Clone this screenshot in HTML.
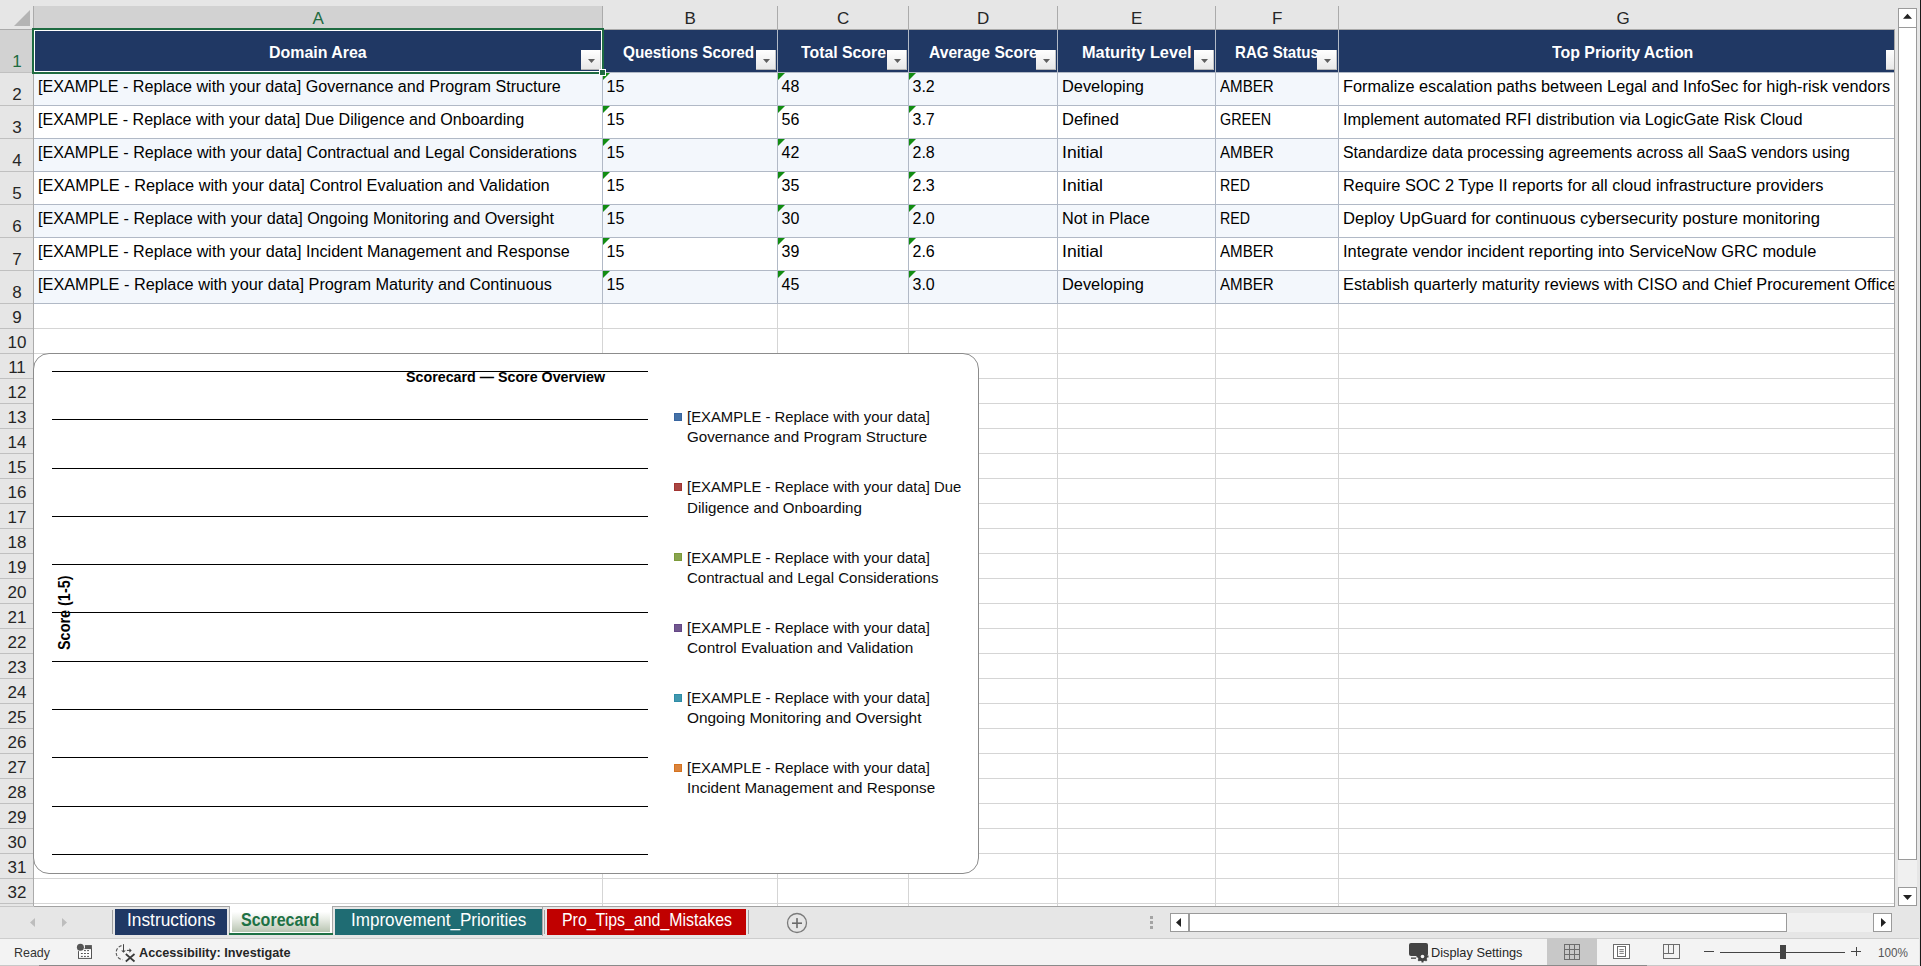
<!DOCTYPE html>
<html><head><meta charset="utf-8"><style>
html,body{margin:0;padding:0;}
body{width:1921px;height:966px;position:relative;overflow:hidden;font-family:"Liberation Sans", sans-serif;background:#e6e6e6;}
</style></head><body>
<div style="position:absolute;left:0px;top:0px;width:1921px;height:966px;background:#e6e6e6;"></div><div style="position:absolute;left:33px;top:29px;width:1861px;height:877px;background:#ffffff;"></div><div style="position:absolute;left:33px;top:328px;width:1861px;height:1px;background:#d5d5d5;"></div><div style="position:absolute;left:33px;top:353px;width:1861px;height:1px;background:#d5d5d5;"></div><div style="position:absolute;left:33px;top:378px;width:1861px;height:1px;background:#d5d5d5;"></div><div style="position:absolute;left:33px;top:403px;width:1861px;height:1px;background:#d5d5d5;"></div><div style="position:absolute;left:33px;top:428px;width:1861px;height:1px;background:#d5d5d5;"></div><div style="position:absolute;left:33px;top:453px;width:1861px;height:1px;background:#d5d5d5;"></div><div style="position:absolute;left:33px;top:478px;width:1861px;height:1px;background:#d5d5d5;"></div><div style="position:absolute;left:33px;top:503px;width:1861px;height:1px;background:#d5d5d5;"></div><div style="position:absolute;left:33px;top:528px;width:1861px;height:1px;background:#d5d5d5;"></div><div style="position:absolute;left:33px;top:553px;width:1861px;height:1px;background:#d5d5d5;"></div><div style="position:absolute;left:33px;top:578px;width:1861px;height:1px;background:#d5d5d5;"></div><div style="position:absolute;left:33px;top:603px;width:1861px;height:1px;background:#d5d5d5;"></div><div style="position:absolute;left:33px;top:628px;width:1861px;height:1px;background:#d5d5d5;"></div><div style="position:absolute;left:33px;top:653px;width:1861px;height:1px;background:#d5d5d5;"></div><div style="position:absolute;left:33px;top:678px;width:1861px;height:1px;background:#d5d5d5;"></div><div style="position:absolute;left:33px;top:703px;width:1861px;height:1px;background:#d5d5d5;"></div><div style="position:absolute;left:33px;top:728px;width:1861px;height:1px;background:#d5d5d5;"></div><div style="position:absolute;left:33px;top:753px;width:1861px;height:1px;background:#d5d5d5;"></div><div style="position:absolute;left:33px;top:778px;width:1861px;height:1px;background:#d5d5d5;"></div><div style="position:absolute;left:33px;top:803px;width:1861px;height:1px;background:#d5d5d5;"></div><div style="position:absolute;left:33px;top:828px;width:1861px;height:1px;background:#d5d5d5;"></div><div style="position:absolute;left:33px;top:853px;width:1861px;height:1px;background:#d5d5d5;"></div><div style="position:absolute;left:33px;top:878px;width:1861px;height:1px;background:#d5d5d5;"></div><div style="position:absolute;left:33px;top:903px;width:1861px;height:1px;background:#d5d5d5;"></div><div style="position:absolute;left:602px;top:303px;width:1px;height:603px;background:#d5d5d5;"></div><div style="position:absolute;left:777px;top:303px;width:1px;height:603px;background:#d5d5d5;"></div><div style="position:absolute;left:908px;top:303px;width:1px;height:603px;background:#d5d5d5;"></div><div style="position:absolute;left:1057px;top:303px;width:1px;height:603px;background:#d5d5d5;"></div><div style="position:absolute;left:1215px;top:303px;width:1px;height:603px;background:#d5d5d5;"></div><div style="position:absolute;left:1338px;top:303px;width:1px;height:603px;background:#d5d5d5;"></div><div style="position:absolute;left:33px;top:72px;width:1305px;height:33px;background:#f3f7fc;"></div><div style="position:absolute;left:33px;top:105px;width:1305px;height:33px;background:#ffffff;"></div><div style="position:absolute;left:33px;top:138px;width:1305px;height:33px;background:#f3f7fc;"></div><div style="position:absolute;left:33px;top:171px;width:1305px;height:33px;background:#ffffff;"></div><div style="position:absolute;left:33px;top:204px;width:1305px;height:33px;background:#f3f7fc;"></div><div style="position:absolute;left:33px;top:237px;width:1305px;height:33px;background:#ffffff;"></div><div style="position:absolute;left:33px;top:270px;width:1305px;height:33px;background:#f3f7fc;"></div><div style="position:absolute;left:33px;top:30px;width:1861px;height:42px;background:#203864;"></div><div style="position:absolute;left:33px;top:72px;width:1861px;height:1px;background:#b1b9c6;"></div><div style="position:absolute;left:33px;top:105px;width:1861px;height:1px;background:#b1b9c6;"></div><div style="position:absolute;left:33px;top:138px;width:1861px;height:1px;background:#b1b9c6;"></div><div style="position:absolute;left:33px;top:171px;width:1861px;height:1px;background:#b1b9c6;"></div><div style="position:absolute;left:33px;top:204px;width:1861px;height:1px;background:#b1b9c6;"></div><div style="position:absolute;left:33px;top:237px;width:1861px;height:1px;background:#b1b9c6;"></div><div style="position:absolute;left:33px;top:270px;width:1861px;height:1px;background:#b1b9c6;"></div><div style="position:absolute;left:33px;top:303px;width:1861px;height:1px;background:#b1b9c6;"></div><div style="position:absolute;left:602px;top:30px;width:1px;height:273px;background:#b1b9c6;"></div><div style="position:absolute;left:777px;top:30px;width:1px;height:273px;background:#b1b9c6;"></div><div style="position:absolute;left:908px;top:30px;width:1px;height:273px;background:#b1b9c6;"></div><div style="position:absolute;left:1057px;top:30px;width:1px;height:273px;background:#b1b9c6;"></div><div style="position:absolute;left:1215px;top:30px;width:1px;height:273px;background:#b1b9c6;"></div><div style="position:absolute;left:1338px;top:30px;width:1px;height:273px;background:#b1b9c6;"></div><div style="position:absolute;left:1894px;top:29px;width:1px;height:878px;background:#a6a6a6;"></div><div style="position:absolute;left:0px;top:906px;width:34px;height:1px;background:#c6c6c6;"></div><div style="position:absolute;left:34px;top:906px;width:1861px;height:1px;background:#a2a2a2;"></div><div style="position:absolute;left:34px;top:6px;width:568px;height:23px;background:#d2d2d2;"></div><div style="position:absolute;left:602px;top:6px;width:1px;height:23px;background:#ababab;"></div><div style="position:absolute;left:777px;top:6px;width:1px;height:23px;background:#ababab;"></div><div style="position:absolute;left:908px;top:6px;width:1px;height:23px;background:#ababab;"></div><div style="position:absolute;left:1057px;top:6px;width:1px;height:23px;background:#ababab;"></div><div style="position:absolute;left:1215px;top:6px;width:1px;height:23px;background:#ababab;"></div><div style="position:absolute;left:1338px;top:6px;width:1px;height:23px;background:#ababab;"></div><div style="position:absolute;left:0px;top:29px;width:1894px;height:1px;background:#aaaaaa;"></div><div style="position:absolute;left:0px;top:30px;width:33px;height:42px;background:#d2d2d2;"></div><div style="position:absolute;left:33px;top:6px;width:1px;height:900px;background:#ababab;"></div><div style="position:absolute;left:0px;top:72px;width:33px;height:1px;background:#c0c0c0;"></div><div style="position:absolute;left:0px;top:105px;width:33px;height:1px;background:#c0c0c0;"></div><div style="position:absolute;left:0px;top:138px;width:33px;height:1px;background:#c0c0c0;"></div><div style="position:absolute;left:0px;top:171px;width:33px;height:1px;background:#c0c0c0;"></div><div style="position:absolute;left:0px;top:204px;width:33px;height:1px;background:#c0c0c0;"></div><div style="position:absolute;left:0px;top:237px;width:33px;height:1px;background:#c0c0c0;"></div><div style="position:absolute;left:0px;top:270px;width:33px;height:1px;background:#c0c0c0;"></div><div style="position:absolute;left:0px;top:303px;width:33px;height:1px;background:#c0c0c0;"></div><div style="position:absolute;left:0px;top:328px;width:33px;height:1px;background:#c0c0c0;"></div><div style="position:absolute;left:0px;top:353px;width:33px;height:1px;background:#c0c0c0;"></div><div style="position:absolute;left:0px;top:378px;width:33px;height:1px;background:#c0c0c0;"></div><div style="position:absolute;left:0px;top:403px;width:33px;height:1px;background:#c0c0c0;"></div><div style="position:absolute;left:0px;top:428px;width:33px;height:1px;background:#c0c0c0;"></div><div style="position:absolute;left:0px;top:453px;width:33px;height:1px;background:#c0c0c0;"></div><div style="position:absolute;left:0px;top:478px;width:33px;height:1px;background:#c0c0c0;"></div><div style="position:absolute;left:0px;top:503px;width:33px;height:1px;background:#c0c0c0;"></div><div style="position:absolute;left:0px;top:528px;width:33px;height:1px;background:#c0c0c0;"></div><div style="position:absolute;left:0px;top:553px;width:33px;height:1px;background:#c0c0c0;"></div><div style="position:absolute;left:0px;top:578px;width:33px;height:1px;background:#c0c0c0;"></div><div style="position:absolute;left:0px;top:603px;width:33px;height:1px;background:#c0c0c0;"></div><div style="position:absolute;left:0px;top:628px;width:33px;height:1px;background:#c0c0c0;"></div><div style="position:absolute;left:0px;top:653px;width:33px;height:1px;background:#c0c0c0;"></div><div style="position:absolute;left:0px;top:678px;width:33px;height:1px;background:#c0c0c0;"></div><div style="position:absolute;left:0px;top:703px;width:33px;height:1px;background:#c0c0c0;"></div><div style="position:absolute;left:0px;top:728px;width:33px;height:1px;background:#c0c0c0;"></div><div style="position:absolute;left:0px;top:753px;width:33px;height:1px;background:#c0c0c0;"></div><div style="position:absolute;left:0px;top:778px;width:33px;height:1px;background:#c0c0c0;"></div><div style="position:absolute;left:0px;top:803px;width:33px;height:1px;background:#c0c0c0;"></div><div style="position:absolute;left:0px;top:828px;width:33px;height:1px;background:#c0c0c0;"></div><div style="position:absolute;left:0px;top:853px;width:33px;height:1px;background:#c0c0c0;"></div><div style="position:absolute;left:0px;top:878px;width:33px;height:1px;background:#c0c0c0;"></div><div style="position:absolute;left:0px;top:903px;width:33px;height:1px;background:#c0c0c0;"></div><svg style="position:absolute;left:0;top:0" width="33" height="29"><polygon points="30,10 30,26 14,26" fill="#b4b4b4"/></svg><div style="position:absolute;top:7.88px;line-height:21px;font-size:17px;font-weight:normal;color:#1e6b41;white-space:nowrap;left:312.53px;">A</div><div style="position:absolute;top:7.88px;line-height:21px;font-size:17px;font-weight:normal;color:#262626;white-space:nowrap;left:684.53px;">B</div><div style="position:absolute;top:7.88px;line-height:21px;font-size:17px;font-weight:normal;color:#262626;white-space:nowrap;left:837.06px;">C</div><div style="position:absolute;top:7.88px;line-height:21px;font-size:17px;font-weight:normal;color:#262626;white-space:nowrap;left:977.06px;">D</div><div style="position:absolute;top:7.88px;line-height:21px;font-size:17px;font-weight:normal;color:#262626;white-space:nowrap;left:1131.03px;">E</div><div style="position:absolute;top:7.88px;line-height:21px;font-size:17px;font-weight:normal;color:#262626;white-space:nowrap;left:1272.00px;">F</div><div style="position:absolute;top:7.88px;line-height:21px;font-size:17px;font-weight:normal;color:#262626;white-space:nowrap;left:1616.38px;">G</div><div style="position:absolute;top:50.88px;line-height:21px;font-size:17px;font-weight:normal;color:#1e6b41;white-space:nowrap;left:12.27px;">1</div><div style="position:absolute;top:83.88px;line-height:21px;font-size:17px;font-weight:normal;color:#262626;white-space:nowrap;left:12.27px;">2</div><div style="position:absolute;top:116.88px;line-height:21px;font-size:17px;font-weight:normal;color:#262626;white-space:nowrap;left:12.27px;">3</div><div style="position:absolute;top:149.88px;line-height:21px;font-size:17px;font-weight:normal;color:#262626;white-space:nowrap;left:12.27px;">4</div><div style="position:absolute;top:182.88px;line-height:21px;font-size:17px;font-weight:normal;color:#262626;white-space:nowrap;left:12.27px;">5</div><div style="position:absolute;top:215.88px;line-height:21px;font-size:17px;font-weight:normal;color:#262626;white-space:nowrap;left:12.27px;">6</div><div style="position:absolute;top:248.88px;line-height:21px;font-size:17px;font-weight:normal;color:#262626;white-space:nowrap;left:12.27px;">7</div><div style="position:absolute;top:281.88px;line-height:21px;font-size:17px;font-weight:normal;color:#262626;white-space:nowrap;left:12.27px;">8</div><div style="position:absolute;top:306.88px;line-height:21px;font-size:17px;font-weight:normal;color:#262626;white-space:nowrap;left:12.27px;">9</div><div style="position:absolute;top:331.88px;line-height:21px;font-size:17px;font-weight:normal;color:#262626;white-space:nowrap;left:7.54px;">10</div><div style="position:absolute;top:356.88px;line-height:21px;font-size:17px;font-weight:normal;color:#262626;white-space:nowrap;left:8.17px;">11</div><div style="position:absolute;top:381.88px;line-height:21px;font-size:17px;font-weight:normal;color:#262626;white-space:nowrap;left:7.54px;">12</div><div style="position:absolute;top:406.88px;line-height:21px;font-size:17px;font-weight:normal;color:#262626;white-space:nowrap;left:7.54px;">13</div><div style="position:absolute;top:431.88px;line-height:21px;font-size:17px;font-weight:normal;color:#262626;white-space:nowrap;left:7.54px;">14</div><div style="position:absolute;top:456.88px;line-height:21px;font-size:17px;font-weight:normal;color:#262626;white-space:nowrap;left:7.54px;">15</div><div style="position:absolute;top:481.88px;line-height:21px;font-size:17px;font-weight:normal;color:#262626;white-space:nowrap;left:7.54px;">16</div><div style="position:absolute;top:506.88px;line-height:21px;font-size:17px;font-weight:normal;color:#262626;white-space:nowrap;left:7.54px;">17</div><div style="position:absolute;top:531.88px;line-height:21px;font-size:17px;font-weight:normal;color:#262626;white-space:nowrap;left:7.54px;">18</div><div style="position:absolute;top:556.88px;line-height:21px;font-size:17px;font-weight:normal;color:#262626;white-space:nowrap;left:7.54px;">19</div><div style="position:absolute;top:581.88px;line-height:21px;font-size:17px;font-weight:normal;color:#262626;white-space:nowrap;left:7.54px;">20</div><div style="position:absolute;top:606.88px;line-height:21px;font-size:17px;font-weight:normal;color:#262626;white-space:nowrap;left:7.54px;">21</div><div style="position:absolute;top:631.88px;line-height:21px;font-size:17px;font-weight:normal;color:#262626;white-space:nowrap;left:7.54px;">22</div><div style="position:absolute;top:656.88px;line-height:21px;font-size:17px;font-weight:normal;color:#262626;white-space:nowrap;left:7.54px;">23</div><div style="position:absolute;top:681.88px;line-height:21px;font-size:17px;font-weight:normal;color:#262626;white-space:nowrap;left:7.54px;">24</div><div style="position:absolute;top:706.88px;line-height:21px;font-size:17px;font-weight:normal;color:#262626;white-space:nowrap;left:7.54px;">25</div><div style="position:absolute;top:731.88px;line-height:21px;font-size:17px;font-weight:normal;color:#262626;white-space:nowrap;left:7.54px;">26</div><div style="position:absolute;top:756.88px;line-height:21px;font-size:17px;font-weight:normal;color:#262626;white-space:nowrap;left:7.54px;">27</div><div style="position:absolute;top:781.88px;line-height:21px;font-size:17px;font-weight:normal;color:#262626;white-space:nowrap;left:7.54px;">28</div><div style="position:absolute;top:806.88px;line-height:21px;font-size:17px;font-weight:normal;color:#262626;white-space:nowrap;left:7.54px;">29</div><div style="position:absolute;top:831.88px;line-height:21px;font-size:17px;font-weight:normal;color:#262626;white-space:nowrap;left:7.54px;">30</div><div style="position:absolute;top:856.88px;line-height:21px;font-size:17px;font-weight:normal;color:#262626;white-space:nowrap;left:7.54px;">31</div><div style="position:absolute;top:881.88px;line-height:21px;font-size:17px;font-weight:normal;color:#262626;white-space:nowrap;left:7.54px;">32</div><div style="position:absolute;top:906.88px;line-height:21px;font-size:17px;font-weight:normal;color:#262626;white-space:nowrap;left:7.54px;">33</div><div style="position:absolute;top:42.25px;line-height:21px;font-size:16.5px;font-weight:bold;color:#ffffff;white-space:nowrap;left:269.10px;transform:scaleX(0.9657);transform-origin:0 0;">Domain Area</div><div style="position:absolute;top:42.25px;line-height:21px;font-size:16.5px;font-weight:bold;color:#ffffff;white-space:nowrap;left:623.40px;transform:scaleX(0.9292);transform-origin:0 0;">Questions Scored</div><div style="position:absolute;top:42.25px;line-height:21px;font-size:16.5px;font-weight:bold;color:#ffffff;white-space:nowrap;left:800.50px;transform:scaleX(0.9589);transform-origin:0 0;">Total Score</div><div style="position:absolute;top:42.25px;line-height:21px;font-size:16.5px;font-weight:bold;color:#ffffff;white-space:nowrap;left:928.90px;transform:scaleX(0.9465);transform-origin:0 0;">Average Score</div><div style="position:absolute;top:42.25px;line-height:21px;font-size:16.5px;font-weight:bold;color:#ffffff;white-space:nowrap;left:1082.20px;transform:scaleX(0.9878);transform-origin:0 0;">Maturity Level</div><div style="position:absolute;top:42.25px;line-height:21px;font-size:16.5px;font-weight:bold;color:#ffffff;white-space:nowrap;left:1235.10px;transform:scaleX(0.9140);transform-origin:0 0;">RAG Status</div><div style="position:absolute;top:42.25px;line-height:21px;font-size:16.5px;font-weight:bold;color:#ffffff;white-space:nowrap;left:1551.70px;transform:scaleX(0.9634);transform-origin:0 0;">Top Priority Action</div><div style="position:absolute;left:581px;top:50px;width:19px;height:19px;background:linear-gradient(#ffffff,#e8e8e8);border-right:1px solid #c4c4c4;border-bottom:1px solid #b4b4b4;"></div><svg style="position:absolute;left:581px;top:50px" width="20" height="20"><polygon points="7,9 14,9 10.5,13" fill="#5f5f5f"/></svg><div style="position:absolute;left:756px;top:50px;width:19px;height:19px;background:linear-gradient(#ffffff,#e8e8e8);border-right:1px solid #c4c4c4;border-bottom:1px solid #b4b4b4;"></div><svg style="position:absolute;left:756px;top:50px" width="20" height="20"><polygon points="7,9 14,9 10.5,13" fill="#5f5f5f"/></svg><div style="position:absolute;left:887px;top:50px;width:19px;height:19px;background:linear-gradient(#ffffff,#e8e8e8);border-right:1px solid #c4c4c4;border-bottom:1px solid #b4b4b4;"></div><svg style="position:absolute;left:887px;top:50px" width="20" height="20"><polygon points="7,9 14,9 10.5,13" fill="#5f5f5f"/></svg><div style="position:absolute;left:1036px;top:50px;width:19px;height:19px;background:linear-gradient(#ffffff,#e8e8e8);border-right:1px solid #c4c4c4;border-bottom:1px solid #b4b4b4;"></div><svg style="position:absolute;left:1036px;top:50px" width="20" height="20"><polygon points="7,9 14,9 10.5,13" fill="#5f5f5f"/></svg><div style="position:absolute;left:1194px;top:50px;width:19px;height:19px;background:linear-gradient(#ffffff,#e8e8e8);border-right:1px solid #c4c4c4;border-bottom:1px solid #b4b4b4;"></div><svg style="position:absolute;left:1194px;top:50px" width="20" height="20"><polygon points="7,9 14,9 10.5,13" fill="#5f5f5f"/></svg><div style="position:absolute;left:1317px;top:50px;width:19px;height:19px;background:linear-gradient(#ffffff,#e8e8e8);border-right:1px solid #c4c4c4;border-bottom:1px solid #b4b4b4;"></div><svg style="position:absolute;left:1317px;top:50px" width="20" height="20"><polygon points="7,9 14,9 10.5,13" fill="#5f5f5f"/></svg><div style="position:absolute;left:1886px;top:50px;width:8px;height:19px;background:linear-gradient(#ffffff,#e8e8e8);border-bottom:1px solid #b4b4b4;"></div><div style="position:absolute;top:77.21px;line-height:20px;font-size:16px;font-weight:normal;color:#000;white-space:nowrap;left:37.50px;transform:scaleX(1.0066);transform-origin:0 0;">[EXAMPLE - Replace with your data] Governance and Program Structure</div><div style="position:absolute;top:77.21px;line-height:20px;font-size:16px;font-weight:normal;color:#000;white-space:nowrap;left:606.50px;">15</div><svg style="position:absolute;left:603px;top:73px" width="8" height="8"><polygon points="0,0 7,0 0,7" fill="#128c12"/></svg><div style="position:absolute;top:77.21px;line-height:20px;font-size:16px;font-weight:normal;color:#000;white-space:nowrap;left:781.50px;">48</div><svg style="position:absolute;left:778px;top:73px" width="8" height="8"><polygon points="0,0 7,0 0,7" fill="#128c12"/></svg><div style="position:absolute;top:77.21px;line-height:20px;font-size:16px;font-weight:normal;color:#000;white-space:nowrap;left:912.50px;">3.2</div><svg style="position:absolute;left:909px;top:73px" width="8" height="8"><polygon points="0,0 7,0 0,7" fill="#128c12"/></svg><div style="position:absolute;top:77.21px;line-height:20px;font-size:16px;font-weight:normal;color:#000;white-space:nowrap;left:1061.50px;transform:scaleX(1.0230);transform-origin:0 0;">Developing</div><div style="position:absolute;top:77.21px;line-height:20px;font-size:16px;font-weight:normal;color:#000;white-space:nowrap;left:1219.50px;transform:scaleX(0.9454);transform-origin:0 0;">AMBER</div><div style="position:absolute;left:1339px;top:72px;width:555px;height:34px;overflow:hidden;"><div style="position:absolute;top:5.21px;line-height:20px;font-size:16px;font-weight:normal;color:#000;white-space:nowrap;left:3.50px;transform:scaleX(1.0170);transform-origin:0 0;">Formalize escalation paths between Legal and InfoSec for high-risk vendors</div></div><div style="position:absolute;top:110.21px;line-height:20px;font-size:16px;font-weight:normal;color:#000;white-space:nowrap;left:37.50px;transform:scaleX(1.0031);transform-origin:0 0;">[EXAMPLE - Replace with your data] Due Diligence and Onboarding</div><div style="position:absolute;top:110.21px;line-height:20px;font-size:16px;font-weight:normal;color:#000;white-space:nowrap;left:606.50px;">15</div><svg style="position:absolute;left:603px;top:106px" width="8" height="8"><polygon points="0,0 7,0 0,7" fill="#128c12"/></svg><div style="position:absolute;top:110.21px;line-height:20px;font-size:16px;font-weight:normal;color:#000;white-space:nowrap;left:781.50px;">56</div><svg style="position:absolute;left:778px;top:106px" width="8" height="8"><polygon points="0,0 7,0 0,7" fill="#128c12"/></svg><div style="position:absolute;top:110.21px;line-height:20px;font-size:16px;font-weight:normal;color:#000;white-space:nowrap;left:912.50px;">3.7</div><svg style="position:absolute;left:909px;top:106px" width="8" height="8"><polygon points="0,0 7,0 0,7" fill="#128c12"/></svg><div style="position:absolute;top:110.21px;line-height:20px;font-size:16px;font-weight:normal;color:#000;white-space:nowrap;left:1061.50px;transform:scaleX(1.0316);transform-origin:0 0;">Defined</div><div style="position:absolute;top:110.21px;line-height:20px;font-size:16px;font-weight:normal;color:#000;white-space:nowrap;left:1219.50px;transform:scaleX(0.8980);transform-origin:0 0;">GREEN</div><div style="position:absolute;left:1339px;top:105px;width:555px;height:34px;overflow:hidden;"><div style="position:absolute;top:5.21px;line-height:20px;font-size:16px;font-weight:normal;color:#000;white-space:nowrap;left:3.50px;transform:scaleX(1.0191);transform-origin:0 0;">Implement automated RFI distribution via LogicGate Risk Cloud</div></div><div style="position:absolute;top:143.21px;line-height:20px;font-size:16px;font-weight:normal;color:#000;white-space:nowrap;left:37.50px;transform:scaleX(1.0097);transform-origin:0 0;">[EXAMPLE - Replace with your data] Contractual and Legal Considerations</div><div style="position:absolute;top:143.21px;line-height:20px;font-size:16px;font-weight:normal;color:#000;white-space:nowrap;left:606.50px;">15</div><svg style="position:absolute;left:603px;top:139px" width="8" height="8"><polygon points="0,0 7,0 0,7" fill="#128c12"/></svg><div style="position:absolute;top:143.21px;line-height:20px;font-size:16px;font-weight:normal;color:#000;white-space:nowrap;left:781.50px;">42</div><svg style="position:absolute;left:778px;top:139px" width="8" height="8"><polygon points="0,0 7,0 0,7" fill="#128c12"/></svg><div style="position:absolute;top:143.21px;line-height:20px;font-size:16px;font-weight:normal;color:#000;white-space:nowrap;left:912.50px;">2.8</div><svg style="position:absolute;left:909px;top:139px" width="8" height="8"><polygon points="0,0 7,0 0,7" fill="#128c12"/></svg><div style="position:absolute;top:143.21px;line-height:20px;font-size:16px;font-weight:normal;color:#000;white-space:nowrap;left:1061.50px;transform:scaleX(1.0974);transform-origin:0 0;">Initial</div><div style="position:absolute;top:143.21px;line-height:20px;font-size:16px;font-weight:normal;color:#000;white-space:nowrap;left:1219.50px;transform:scaleX(0.9454);transform-origin:0 0;">AMBER</div><div style="position:absolute;left:1339px;top:138px;width:555px;height:34px;overflow:hidden;"><div style="position:absolute;top:5.21px;line-height:20px;font-size:16px;font-weight:normal;color:#000;white-space:nowrap;left:3.50px;transform:scaleX(0.9912);transform-origin:0 0;">Standardize data processing agreements across all SaaS vendors using</div></div><div style="position:absolute;top:176.21px;line-height:20px;font-size:16px;font-weight:normal;color:#000;white-space:nowrap;left:37.50px;transform:scaleX(1.0207);transform-origin:0 0;">[EXAMPLE - Replace with your data] Control Evaluation and Validation</div><div style="position:absolute;top:176.21px;line-height:20px;font-size:16px;font-weight:normal;color:#000;white-space:nowrap;left:606.50px;">15</div><svg style="position:absolute;left:603px;top:172px" width="8" height="8"><polygon points="0,0 7,0 0,7" fill="#128c12"/></svg><div style="position:absolute;top:176.21px;line-height:20px;font-size:16px;font-weight:normal;color:#000;white-space:nowrap;left:781.50px;">35</div><svg style="position:absolute;left:778px;top:172px" width="8" height="8"><polygon points="0,0 7,0 0,7" fill="#128c12"/></svg><div style="position:absolute;top:176.21px;line-height:20px;font-size:16px;font-weight:normal;color:#000;white-space:nowrap;left:912.50px;">2.3</div><svg style="position:absolute;left:909px;top:172px" width="8" height="8"><polygon points="0,0 7,0 0,7" fill="#128c12"/></svg><div style="position:absolute;top:176.21px;line-height:20px;font-size:16px;font-weight:normal;color:#000;white-space:nowrap;left:1061.50px;transform:scaleX(1.0974);transform-origin:0 0;">Initial</div><div style="position:absolute;top:176.21px;line-height:20px;font-size:16px;font-weight:normal;color:#000;white-space:nowrap;left:1219.50px;transform:scaleX(0.8851);transform-origin:0 0;">RED</div><div style="position:absolute;left:1339px;top:171px;width:555px;height:34px;overflow:hidden;"><div style="position:absolute;top:5.21px;line-height:20px;font-size:16px;font-weight:normal;color:#000;white-space:nowrap;left:3.50px;transform:scaleX(1.0238);transform-origin:0 0;">Require SOC 2 Type II reports for all cloud infrastructure providers</div></div><div style="position:absolute;top:209.21px;line-height:20px;font-size:16px;font-weight:normal;color:#000;white-space:nowrap;left:37.50px;transform:scaleX(1.0126);transform-origin:0 0;">[EXAMPLE - Replace with your data] Ongoing Monitoring and Oversight</div><div style="position:absolute;top:209.21px;line-height:20px;font-size:16px;font-weight:normal;color:#000;white-space:nowrap;left:606.50px;">15</div><svg style="position:absolute;left:603px;top:205px" width="8" height="8"><polygon points="0,0 7,0 0,7" fill="#128c12"/></svg><div style="position:absolute;top:209.21px;line-height:20px;font-size:16px;font-weight:normal;color:#000;white-space:nowrap;left:781.50px;">30</div><svg style="position:absolute;left:778px;top:205px" width="8" height="8"><polygon points="0,0 7,0 0,7" fill="#128c12"/></svg><div style="position:absolute;top:209.21px;line-height:20px;font-size:16px;font-weight:normal;color:#000;white-space:nowrap;left:912.50px;">2.0</div><svg style="position:absolute;left:909px;top:205px" width="8" height="8"><polygon points="0,0 7,0 0,7" fill="#128c12"/></svg><div style="position:absolute;top:209.21px;line-height:20px;font-size:16px;font-weight:normal;color:#000;white-space:nowrap;left:1061.50px;transform:scaleX(1.0166);transform-origin:0 0;">Not in Place</div><div style="position:absolute;top:209.21px;line-height:20px;font-size:16px;font-weight:normal;color:#000;white-space:nowrap;left:1219.50px;transform:scaleX(0.8851);transform-origin:0 0;">RED</div><div style="position:absolute;left:1339px;top:204px;width:555px;height:34px;overflow:hidden;"><div style="position:absolute;top:5.21px;line-height:20px;font-size:16px;font-weight:normal;color:#000;white-space:nowrap;left:3.50px;transform:scaleX(1.0374);transform-origin:0 0;">Deploy UpGuard for continuous cybersecurity posture monitoring</div></div><div style="position:absolute;top:242.21px;line-height:20px;font-size:16px;font-weight:normal;color:#000;white-space:nowrap;left:37.50px;transform:scaleX(1.0081);transform-origin:0 0;">[EXAMPLE - Replace with your data] Incident Management and Response</div><div style="position:absolute;top:242.21px;line-height:20px;font-size:16px;font-weight:normal;color:#000;white-space:nowrap;left:606.50px;">15</div><svg style="position:absolute;left:603px;top:238px" width="8" height="8"><polygon points="0,0 7,0 0,7" fill="#128c12"/></svg><div style="position:absolute;top:242.21px;line-height:20px;font-size:16px;font-weight:normal;color:#000;white-space:nowrap;left:781.50px;">39</div><svg style="position:absolute;left:778px;top:238px" width="8" height="8"><polygon points="0,0 7,0 0,7" fill="#128c12"/></svg><div style="position:absolute;top:242.21px;line-height:20px;font-size:16px;font-weight:normal;color:#000;white-space:nowrap;left:912.50px;">2.6</div><svg style="position:absolute;left:909px;top:238px" width="8" height="8"><polygon points="0,0 7,0 0,7" fill="#128c12"/></svg><div style="position:absolute;top:242.21px;line-height:20px;font-size:16px;font-weight:normal;color:#000;white-space:nowrap;left:1061.50px;transform:scaleX(1.0974);transform-origin:0 0;">Initial</div><div style="position:absolute;top:242.21px;line-height:20px;font-size:16px;font-weight:normal;color:#000;white-space:nowrap;left:1219.50px;transform:scaleX(0.9454);transform-origin:0 0;">AMBER</div><div style="position:absolute;left:1339px;top:237px;width:555px;height:34px;overflow:hidden;"><div style="position:absolute;top:5.21px;line-height:20px;font-size:16px;font-weight:normal;color:#000;white-space:nowrap;left:3.50px;transform:scaleX(1.0274);transform-origin:0 0;">Integrate vendor incident reporting into ServiceNow GRC module</div></div><div style="position:absolute;top:275.21px;line-height:20px;font-size:16px;font-weight:normal;color:#000;white-space:nowrap;left:37.50px;transform:scaleX(1.0174);transform-origin:0 0;">[EXAMPLE - Replace with your data] Program Maturity and Continuous</div><div style="position:absolute;top:275.21px;line-height:20px;font-size:16px;font-weight:normal;color:#000;white-space:nowrap;left:606.50px;">15</div><svg style="position:absolute;left:603px;top:271px" width="8" height="8"><polygon points="0,0 7,0 0,7" fill="#128c12"/></svg><div style="position:absolute;top:275.21px;line-height:20px;font-size:16px;font-weight:normal;color:#000;white-space:nowrap;left:781.50px;">45</div><svg style="position:absolute;left:778px;top:271px" width="8" height="8"><polygon points="0,0 7,0 0,7" fill="#128c12"/></svg><div style="position:absolute;top:275.21px;line-height:20px;font-size:16px;font-weight:normal;color:#000;white-space:nowrap;left:912.50px;">3.0</div><svg style="position:absolute;left:909px;top:271px" width="8" height="8"><polygon points="0,0 7,0 0,7" fill="#128c12"/></svg><div style="position:absolute;top:275.21px;line-height:20px;font-size:16px;font-weight:normal;color:#000;white-space:nowrap;left:1061.50px;transform:scaleX(1.0230);transform-origin:0 0;">Developing</div><div style="position:absolute;top:275.21px;line-height:20px;font-size:16px;font-weight:normal;color:#000;white-space:nowrap;left:1219.50px;transform:scaleX(0.9454);transform-origin:0 0;">AMBER</div><div style="position:absolute;left:1339px;top:270px;width:555px;height:34px;overflow:hidden;"><div style="position:absolute;top:5.21px;line-height:20px;font-size:16px;font-weight:normal;color:#000;white-space:nowrap;left:3.50px;transform:scaleX(1.0193);transform-origin:0 0;">Establish quarterly maturity reviews with CISO and Chief Procurement Officer</div></div><div style="position:absolute;left:32px;top:28px;width:568px;height:42px;border:2px solid #1e6b41;box-shadow:inset 0 0 0 1px #fff;"></div><div style="position:absolute;left:600px;top:70px;width:5px;height:5px;background:#1e6b41;box-shadow:0 0 0 1px #fff;"></div><div style="position:absolute;left:33px;top:353px;width:944px;height:519px;background:#fff;border:1px solid #8c8c8c;border-radius:16px;"></div><div style="position:absolute;left:52px;top:371px;width:596px;height:1px;background:#000;"></div><div style="position:absolute;left:52px;top:419px;width:596px;height:1px;background:#000;"></div><div style="position:absolute;left:52px;top:468px;width:596px;height:1px;background:#000;"></div><div style="position:absolute;left:52px;top:516px;width:596px;height:1px;background:#000;"></div><div style="position:absolute;left:52px;top:564px;width:596px;height:1px;background:#000;"></div><div style="position:absolute;left:52px;top:612px;width:596px;height:1px;background:#000;"></div><div style="position:absolute;left:52px;top:661px;width:596px;height:1px;background:#000;"></div><div style="position:absolute;left:52px;top:709px;width:596px;height:1px;background:#000;"></div><div style="position:absolute;left:52px;top:757px;width:596px;height:1px;background:#000;"></div><div style="position:absolute;left:52px;top:806px;width:596px;height:1px;background:#000;"></div><div style="position:absolute;left:52px;top:854px;width:596px;height:1px;background:#000;"></div><div style="position:absolute;top:367.81px;line-height:18px;font-size:14.5px;font-weight:bold;color:#000;white-space:nowrap;left:405.60px;transform:scaleX(0.9836);transform-origin:0 0;">Scorecard — Score Overview</div><div style="position:absolute;left:54.50px;top:649.50px;font-size:16px;line-height:20px;font-weight:bold;white-space:nowrap;transform-origin:0 0;transform:rotate(-90deg) scaleX(0.9008);">Score (1-5)</div><div style="position:absolute;left:674px;top:413px;width:6px;height:6px;background:#4572a7;border:1px solid #3865a0;"></div><div style="position:absolute;top:407.24px;line-height:19px;font-size:15px;font-weight:normal;color:#0d0d0d;white-space:nowrap;left:686.90px;transform:scaleX(0.9905);transform-origin:0 0;">[EXAMPLE - Replace with your data]</div><div style="position:absolute;top:427.44px;line-height:19px;font-size:15px;font-weight:normal;color:#0d0d0d;white-space:nowrap;left:686.90px;transform:scaleX(1.0113);transform-origin:0 0;">Governance and Program Structure</div><div style="position:absolute;left:674px;top:483px;width:6px;height:6px;background:#aa4643;border:1px solid #a13431;"></div><div style="position:absolute;top:477.44px;line-height:19px;font-size:15px;font-weight:normal;color:#0d0d0d;white-space:nowrap;left:686.90px;transform:scaleX(0.9906);transform-origin:0 0;">[EXAMPLE - Replace with your data] Due</div><div style="position:absolute;top:497.64px;line-height:19px;font-size:15px;font-weight:normal;color:#0d0d0d;white-space:nowrap;left:686.90px;transform:scaleX(1.0078);transform-origin:0 0;">Diligence and Onboarding</div><div style="position:absolute;left:674px;top:553px;width:6px;height:6px;background:#89a54e;border:1px solid #7c9a3a;"></div><div style="position:absolute;top:547.64px;line-height:19px;font-size:15px;font-weight:normal;color:#0d0d0d;white-space:nowrap;left:686.90px;transform:scaleX(0.9905);transform-origin:0 0;">[EXAMPLE - Replace with your data]</div><div style="position:absolute;top:567.84px;line-height:19px;font-size:15px;font-weight:normal;color:#0d0d0d;white-space:nowrap;left:686.90px;transform:scaleX(1.0016);transform-origin:0 0;">Contractual and Legal Considerations</div><div style="position:absolute;left:674px;top:624px;width:6px;height:6px;background:#71588f;border:1px solid #654686;"></div><div style="position:absolute;top:617.84px;line-height:19px;font-size:15px;font-weight:normal;color:#0d0d0d;white-space:nowrap;left:686.90px;transform:scaleX(0.9905);transform-origin:0 0;">[EXAMPLE - Replace with your data]</div><div style="position:absolute;top:638.04px;line-height:19px;font-size:15px;font-weight:normal;color:#0d0d0d;white-space:nowrap;left:686.90px;transform:scaleX(1.0258);transform-origin:0 0;">Control Evaluation and Validation</div><div style="position:absolute;left:674px;top:694px;width:6px;height:6px;background:#4198af;border:1px solid #2e8ca6;"></div><div style="position:absolute;top:688.04px;line-height:19px;font-size:15px;font-weight:normal;color:#0d0d0d;white-space:nowrap;left:686.90px;transform:scaleX(0.9905);transform-origin:0 0;">[EXAMPLE - Replace with your data]</div><div style="position:absolute;top:708.24px;line-height:19px;font-size:15px;font-weight:normal;color:#0d0d0d;white-space:nowrap;left:686.90px;transform:scaleX(1.0260);transform-origin:0 0;">Ongoing Monitoring and Oversight</div><div style="position:absolute;left:674px;top:764px;width:6px;height:6px;background:#db843d;border:1px solid #d5731f;"></div><div style="position:absolute;top:758.24px;line-height:19px;font-size:15px;font-weight:normal;color:#0d0d0d;white-space:nowrap;left:686.90px;transform:scaleX(0.9905);transform-origin:0 0;">[EXAMPLE - Replace with your data]</div><div style="position:absolute;top:778.44px;line-height:19px;font-size:15px;font-weight:normal;color:#0d0d0d;white-space:nowrap;left:686.90px;transform:scaleX(1.0119);transform-origin:0 0;">Incident Management and Response</div><div style="position:absolute;left:0px;top:907px;width:1919px;height:31px;background:#e6e6e6;"></div><div style="position:absolute;left:0px;top:938px;width:1919px;height:1px;background:#cdcdcd;"></div><svg style="position:absolute;left:0;top:907" width="110" height="30"><polygon points="35,11 35,20 30,15.5" fill="#bdbdbd"/><polygon points="62,11 62,20 67,15.5" fill="#bdbdbd"/></svg><div style="position:absolute;left:112px;top:910px;width:1px;height:24px;background:#a0a0a0;"></div><div style="position:absolute;left:115px;top:909px;width:112px;height:26px;background:#203864;"></div><div style="position:absolute;top:909.22px;line-height:22px;font-size:17.5px;font-weight:normal;color:#fff;white-space:nowrap;left:126.90px;transform:scaleX(0.9890);transform-origin:0 0;">Instructions</div><div style="position:absolute;left:229px;top:906px;width:102px;height:27px;border:1px solid #a8a8a8;border-top:none;border-bottom:none;background:#fff;"></div><div style="position:absolute;left:232px;top:906px;width:98px;height:26px;background:linear-gradient(#ffffff 0%,#ffffff 22%,#e9ede6 50%,#b9c5b2 100%);"></div><div style="position:absolute;left:229px;top:933px;width:104px;height:2px;background:#1e7145;"></div><div style="position:absolute;top:908.92px;line-height:22px;font-size:17.5px;font-weight:bold;color:#1e7145;white-space:nowrap;left:241.20px;transform:scaleX(0.9158);transform-origin:0 0;">Scorecard</div><div style="position:absolute;left:332px;top:906px;width:210px;height:29px;border-top:1px solid #a8a8a8;border-right:1px solid #a8a8a8;"></div><div style="position:absolute;left:335px;top:909px;width:207px;height:26px;background:#1f6c73;"></div><div style="position:absolute;top:908.92px;line-height:22px;font-size:17.5px;font-weight:normal;color:#fff;white-space:nowrap;left:351.00px;transform:scaleX(0.9743);transform-origin:0 0;">Improvement_Priorities</div><div style="position:absolute;left:544px;top:910px;width:1px;height:24px;background:#a0a0a0;"></div><div style="position:absolute;left:547px;top:909px;width:199px;height:26px;background:#c00000;"></div><div style="position:absolute;top:909.22px;line-height:22px;font-size:17.5px;font-weight:normal;color:#fff;white-space:nowrap;left:561.90px;transform:scaleX(0.9086);transform-origin:0 0;">Pro_Tips_and_Mistakes</div><div style="position:absolute;left:748px;top:910px;width:1px;height:24px;background:#a0a0a0;"></div><svg style="position:absolute;left:785px;top:911px" width="24" height="24"><circle cx="12" cy="12" r="9.5" fill="none" stroke="#7a7a7a" stroke-width="1.3"/><rect x="7" y="11.4" width="10" height="1.6" fill="#6a6a6a"/><rect x="11.2" y="7.1" width="1.6" height="10" fill="#6a6a6a"/></svg><div style="position:absolute;left:1150px;top:916px;width:3px;height:3px;background:#a4a4a4;"></div><div style="position:absolute;left:1150px;top:921px;width:3px;height:3px;background:#a4a4a4;"></div><div style="position:absolute;left:1150px;top:926px;width:3px;height:3px;background:#a4a4a4;"></div><div style="position:absolute;left:1170px;top:913px;width:722px;height:19px;background:#f0f0f0;"></div><div style="position:absolute;left:1170px;top:913px;width:17px;height:17px;border:1px solid #9a9a9a;background:#fff;"></div><svg style="position:absolute;left:1170px;top:913px" width="19" height="19"><polygon points="6,9.5 11,5 11,14" fill="#222"/></svg><div style="position:absolute;left:1189px;top:913px;width:596px;height:17px;border:1px solid #9a9a9a;background:#fff;"></div><div style="position:absolute;left:1873px;top:913px;width:17px;height:17px;border:1px solid #9a9a9a;background:#fff;"></div><svg style="position:absolute;left:1873px;top:913px" width="19" height="19"><polygon points="13,9.5 8,5 8,14" fill="#222"/></svg><div style="position:absolute;left:1898px;top:27px;width:19px;height:860px;background:#f0f0f0;"></div><div style="position:absolute;left:1898px;top:8px;width:17px;height:18px;border:1px solid #9a9a9a;background:#fff;"></div><svg style="position:absolute;left:1898px;top:8px" width="19" height="20"><polygon points="5,10.8 14,10.8 9.5,5.8" fill="#222"/></svg><div style="position:absolute;left:1898px;top:27px;width:17px;height:831px;border:1px solid #9a9a9a;background:#fff;"></div><div style="position:absolute;left:1898px;top:887px;width:17px;height:17px;border:1px solid #9a9a9a;background:#fff;"></div><svg style="position:absolute;left:1898px;top:887px" width="19" height="19"><polygon points="5,8 14,8 9.5,13" fill="#222"/></svg><div style="position:absolute;left:1919px;top:0px;width:1px;height:966px;background:#e6e6e6;"></div><div style="position:absolute;left:1920px;top:0px;width:1px;height:966px;background:#1a1a1a;"></div><div style="position:absolute;left:0px;top:939px;width:1919px;height:26px;background:#f3f3f3;"></div><div style="position:absolute;left:0px;top:965px;width:39px;height:1px;background:#c8c8c8;"></div><div style="position:absolute;left:39px;top:965px;width:1608px;height:1px;background:#8a8a8a;"></div><div style="position:absolute;left:1647px;top:965px;width:272px;height:1px;background:#c8c8c8;"></div><div style="position:absolute;top:944.60px;line-height:16px;font-size:13px;font-weight:normal;color:#333;white-space:nowrap;left:14.40px;transform:scaleX(0.9580);transform-origin:0 0;">Ready</div><svg style="position:absolute;left:70px;top:940px" width="68" height="26"><rect x="8.5" y="8.6" width="13" height="9.8" fill="#fff" stroke="#555" stroke-width="1"/><rect x="14.9" y="5.1" width="7" height="3.6" fill="#555"/><circle cx="10.4" cy="7.3" r="4.3" fill="#f3f3f3"/><circle cx="10.4" cy="7.3" r="3.5" fill="#555"/><g fill="#555"><rect x="14" y="10.1" width="1.9" height="1"/><rect x="17.1" y="10.1" width="1.9" height="1"/><rect x="10.9" y="13" width="1.9" height="1"/><rect x="14" y="13" width="1.9" height="1"/><rect x="17.1" y="13" width="1.9" height="1"/><rect x="10.9" y="15.9" width="1.9" height="1"/><rect x="14" y="15.9" width="1.9" height="1"/><rect x="17.1" y="15.9" width="1.9" height="1"/></g><path d="M51.5 5.6 A7.2 7.2 0 0 0 52.5 19.7" fill="none" stroke="#555" stroke-width="1.1" stroke-dasharray="3.2 1.6"/><path d="M53.5 4.2 V11" stroke="#444" stroke-width="1"/><polygon points="51.2,10.4 55.8,10.4 53.5,12.8" fill="#444"/><path d="M56.9 10.4 H60" stroke="#444" stroke-width="1"/><polygon points="59.4,8.2 61.7,10.4 59.4,12.7" fill="#444"/><path d="M55.8 14 L64.5 21.5 M64.5 14 L55.8 21.5" stroke="#3a3a3a" stroke-width="1.7"/></svg><div style="position:absolute;top:944.70px;line-height:16px;font-size:13px;font-weight:bold;color:#262626;white-space:nowrap;left:138.75px;transform:scaleX(0.9753);transform-origin:0 0;">Accessibility: Investigate</div><svg style="position:absolute;left:1408px;top:942px" width="22" height="22"><rect x="1" y="1" width="19" height="13" rx="2" fill="#444"/><rect x="3" y="15.5" width="5" height="1.3" fill="#444"/><circle cx="14.5" cy="14.5" r="4.8" fill="#444"/><circle cx="14.5" cy="14.5" r="1.8" fill="#f3f3f3"/><g stroke="#444" stroke-width="2"><path d="M14.5 8.5v12M8.5 14.5h12M10.3 10.3l8.4 8.4M18.7 10.3l-8.4 8.4"/></g><circle cx="14.5" cy="14.5" r="1.8" fill="#f3f3f3"/></svg><div style="position:absolute;top:944.50px;line-height:16px;font-size:13px;font-weight:normal;color:#262626;white-space:nowrap;left:1430.50px;transform:scaleX(0.9816);transform-origin:0 0;">Display Settings</div><div style="position:absolute;left:1547px;top:938px;width:50px;height:27px;background:#c8c8c8;"></div><svg style="position:absolute;left:1563px;top:943px" width="19" height="18"><g fill="none" stroke="#6d6d6d" stroke-width="1"><rect x="1.5" y="1.5" width="15" height="15"/><path d="M6.5 1.5v15M11.5 1.5v15M1.5 6.5h15M1.5 11.5h15"/></g></svg><svg style="position:absolute;left:1612px;top:943px" width="19" height="18"><g fill="none" stroke="#6d6d6d" stroke-width="1"><rect x="1.5" y="1.5" width="16" height="14" fill="#fff"/><rect x="5.5" y="3.5" width="8" height="10"/></g><g stroke="#6d6d6d" stroke-width="0.9"><path d="M7.4 6.6h4.4M7.4 8.4h4.4M7.4 10.4h4.4"/></g></svg><svg style="position:absolute;left:1662px;top:943px" width="19" height="18"><g fill="none" stroke="#6d6d6d" stroke-width="1"><rect x="1.5" y="1.5" width="16" height="14"/><path d="M6.5 1.5v9M1.5 10.5h10.5M11.5 1.5v9"/></g></svg><div style="position:absolute;left:1704px;top:951px;width:10px;height:1px;background:#444;"></div><div style="position:absolute;left:1720px;top:952px;width:125px;height:1px;background:#444;"></div><div style="position:absolute;left:1780px;top:945px;width:6px;height:14px;background:#444;"></div><div style="position:absolute;left:1851px;top:951px;width:10px;height:1px;background:#444;"></div><div style="position:absolute;left:1855.5px;top:947px;width:1px;height:9px;background:#444;"></div><div style="position:absolute;top:944.70px;line-height:16px;font-size:13px;font-weight:normal;color:#555;white-space:nowrap;left:1878.20px;transform:scaleX(0.9023);transform-origin:0 0;">100%</div>
</body></html>
